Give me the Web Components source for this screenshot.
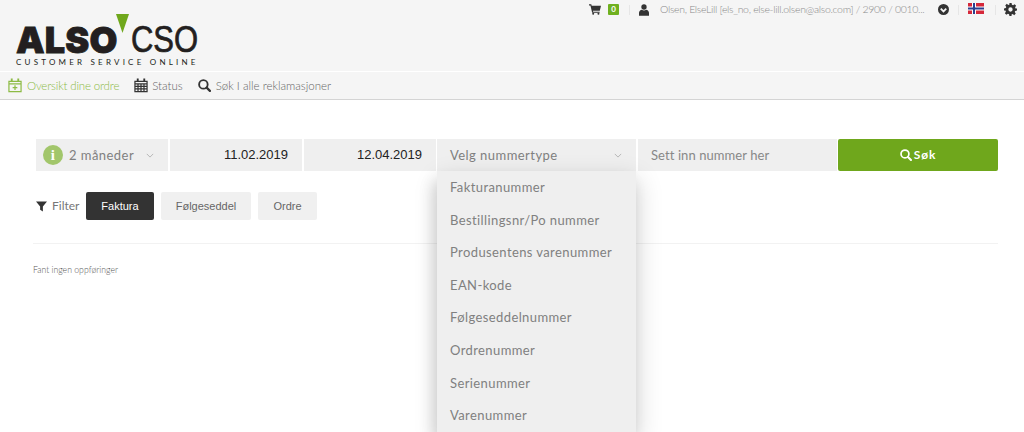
<!DOCTYPE html>
<html lang="no"><head><meta charset="utf-8"><title>ALSO CSO</title>
<style>html,body{margin:0;padding:0;background:#fff;overflow:hidden}body{width:1024px;height:432px;font-family:Lato,"Noto Sans",sans-serif}</style>
</head><body>
<cso-app></cso-app>
<script>
const I={
cart:'<svg viewBox="0 0 16 14" width="12" height="11"><path fill="currentColor" d="M0 0h3l.6 2H16l-1.6 6.5H5.2l.4 1.5h8.6v1.4H4.2L1.9 1.5H0z"/><circle fill="currentColor" cx="5.6" cy="12.7" r="1.3"/><circle fill="currentColor" cx="12.6" cy="12.7" r="1.3"/></svg>',
user:'<svg viewBox="0 0 12 14" width="10" height="12"><circle fill="currentColor" cx="6" cy="3.4" r="3.2"/><path fill="currentColor" d="M0 14v-3.6C0 8 1.8 7 3.4 6.6 4.2 7.2 5 7.5 6 7.5s1.8-.3 2.6-.9C10.200 7 12 8 12 10.400V14z"/></svg>',
chev:'<svg viewBox="0 0 12 12" width="11" height="11"><circle fill="currentColor" cx="6" cy="6" r="6"/><path fill="none" stroke="#f5f5f5" stroke-width="2" d="M3 5l3 3 3-3"/></svg>',
gear:'<svg viewBox="0 0 24 24" width="13" height="13"><path fill="currentColor" fill-rule="evenodd" d="M10 0h4l.6 3.300 2.200.9 2.800-1.900 2.800 2.800-1.900 2.800.9 2.200L24 10v4l-3.300.6-.9 2.200 1.900 2.800-2.800 2.800-2.800-1.900-2.200.9L14 24h-4l-.6-3.300-2.200-.9-2.800 1.900-2.800-2.800 1.900-2.800-.9-2.200L0 14v-4l3.300-.6.9-2.200-1.900-2.800 2.800-2.800 2.800 1.900 2.200-.9zM12 8a4 4 0 1 0 0 8 4 4 0 0 0 0-8z"/></svg>',
flag:'<svg viewBox="0 0 16 11" width="16" height="11"><rect width="16" height="11" fill="#d5283a"/><rect x="4" width="4" height="11" fill="#fff"/><rect y="3.500" width="16" height="4" fill="#fff"/><rect x="5" width="2" height="11" fill="#2c3f8f"/><rect y="4.500" width="16" height="2" fill="#2c3f8f"/></svg>',
calPlus:'<svg viewBox="0 0 15 15" width="14" height="15"><path fill="none" stroke="currentColor" stroke-width="1.300" d="M1 3h13v11H1zM1 5.800h13"/><path stroke="currentColor" stroke-width="2" d="M4 0v3.500M11 0v3.500"/><path stroke="currentColor" stroke-width="1.300" d="M7.500 7.300v5M5 9.800h5"/></svg>',
cal:'<svg viewBox="0 0 15 15" width="14" height="15"><path fill="none" stroke="currentColor" stroke-width="1.300" d="M1 3h13v11H1zM1 5.800h13M1 8.500h13M1 11.200h13M4.300 5.800V14M7.500 5.800V14M10.700 5.800V14"/><path stroke="currentColor" stroke-width="2" d="M4 0v3.500M11 0v3.500"/></svg>',
search:'<svg viewBox="0 0 14 14" width="13" height="13"><circle fill="none" stroke="currentColor" stroke-width="2" cx="5.800" cy="5.800" r="4.600"/><path stroke="currentColor" stroke-width="2.400" stroke-linecap="round" d="M9.300 9.300l3.500 3.500"/></svg>',
filter:'<svg viewBox="0 0 12 12" width="11" height="11"><path fill="currentColor" d="M0 .5h12L7.500 6v5.500l-3-2V6z"/></svg>',
down:'<svg viewBox="0 0 10 6" width="8" height="5"><path fill="none" stroke="currentColor" stroke-width="1" d="M1 1l4 4 4-4"/></svg>'
};
function el(name,css,html){customElements.define(name,class extends HTMLElement{constructor(){super();this.attachShadow({mode:'open'}).innerHTML='<style>'+css+'</style>'+html}})}

el('cso-logo',`:host{display:block;position:relative;width:220px;height:64px;color:#231f20}
.row{display:flex;align-items:flex-end;height:49px;padding-left:16px;line-height:32px}
.a{flex:none;font:900 36px/32px Inter,Roboto,sans-serif;letter-spacing:.2px;-webkit-text-stroke:.8px #231f20;width:115px}
.c{flex:none;font:400 36px/32px "Liberation Sans",sans-serif;-webkit-text-stroke:.7px #231f20;transform:scaleX(.86);transform-origin:left}
.s{font:400 8px/10px Lato,sans-serif;letter-spacing:3.220px;padding-left:16px;white-space:nowrap;margin-top:1px}
svg{position:absolute;left:116px;top:7px}`,
`<svg width="13" height="19" viewBox="0 0 13 19"><path fill="#6fa71c" d="M0 0h13L6.500 19z"/></svg><div class="row"><span class="a">ALSO</span><span class="c">CSO</span></div><div class="s">CUSTOMER SERVICE ONLINE</div>`);

el('cso-top',`:host{display:flex;align-items:center;height:19px;color:#8a8a8a;font:300 10.500px/19px Lato,sans-serif;white-space:nowrap}
.i{display:flex;color:#333}.b{background:#6fb01f;color:#fff;font:700 8px/11px Lato,sans-serif;width:11px;height:11px;text-align:center;margin-left:7px;border-radius:1px}
.d{width:1px;height:10px;background:#e6e6e6}`,
`<span class="i">${I.cart}</span><span class="b">0</span><span class="d" style="margin-left:10px"></span><span class="i" style="margin-left:9px">${I.user}</span><span style="width:263px;margin-left:11px;letter-spacing:-.32px">Olsen, ElseLill [els_no, else-lill.olsen@also.com] / 2900 / 0010...</span><span class="i" style="margin-left:15px">${I.chev}</span><span class="d" style="margin-left:9px"></span><span class="i" style="margin-left:9px;margin-top:-3px">${I.flag}</span><span class="d" style="margin-left:11px"></span><span class="i" style="margin-left:8px">${I.gear}</span>`);

el('cso-header',`:host{display:block;background:#f5f5f5;height:71px;position:relative}
.t{display:flex;justify-content:flex-end;padding-right:7px}
cso-logo{margin-top:-12px}`,`<div class="t"><cso-top></cso-top></div><cso-logo></cso-logo>`);

el('cso-nav',`:host{display:flex;align-items:center;background:#f5f5f5;height:27px;border-top:1px solid #fff;border-bottom:1px solid #d4d4d4;padding-left:8px;font:300 11.500px/27px Lato,sans-serif;color:#666;white-space:nowrap}
span{display:flex;align-items:center;gap:5px}.on{color:#8dbb45;letter-spacing:-.16px}svg{display:block}.g{color:#333}`,
`<span class="on">${I.calPlus}Oversikt dine ordre</span><span class="g" style="margin-left:15px;gap:4px">${I.cal}<b style="font-weight:300;color:#666">Status</b></span><span class="g" style="margin-left:15px">${I.search}<b style="font-weight:300;color:#666">Søk I alle reklamasjoner</b></span>`);

el('cso-select',`:host{display:flex;align-items:center;background:#efefef;height:32px;box-sizing:border-box;color:#808080;font:400 13px/32px Lato,sans-serif;letter-spacing:.45px;white-space:nowrap;padding:0 14px 0 13px}
.t{flex:1}.c{color:#aaa;display:flex;align-items:center}`,`<slot name="icon"></slot><span class="t"><slot></slot></span><span class="c">${I.down}</span>`);

el('cso-date',`:host{display:block;background:#efefef;height:32px;color:#222;font:400 13px/32px "Liberation Sans",sans-serif;letter-spacing:0;text-align:right;padding-right:14px;box-sizing:border-box}`,`<slot></slot>`);

el('cso-menu',`:host{display:block;position:absolute;left:437px;top:171px;width:199px;height:262px;background:#efefef;box-shadow:-4px 10px 14px rgba(0,0,0,.12),2px 8px 24px rgba(0,0,0,.16);color:#808080;font:400 13px/32.600px Lato,sans-serif;letter-spacing:.4px;padding:0 0 0 13px;box-sizing:border-box;white-space:nowrap;overflow:hidden}
div{height:32.600px}`,['Fakturanummer','Bestillingsnr/Po nummer','Produsentens varenummer','EAN-kode','Følgeseddelnummer','Ordrenummer','Serienummer','Varenummer'].map(x=>`<div>${x}</div>`).join(''));

el('cso-search',`:host{display:grid;grid-template-columns:132px 132px 132px 199px 199px 158px;column-gap:2px;height:32px;margin:39px 26px 0 36px}
.sel2{margin-left:-1px;margin-right:1px}
.n{background:#efefef;color:#888;font:400 13px/32px Lato,sans-serif;letter-spacing:.08px;padding-left:13px;margin-left:-1px;margin-right:1px}
.b{background:#6fa71c;color:#fff;font:700 12px/32px Lato,sans-serif;letter-spacing:.8px;display:flex;align-items:center;justify-content:center;gap:2px;border-radius:2px;margin-left:-2px}
.b svg{width:12px;height:12px}
.i{width:20px;height:20px;border-radius:50%;background:#a2c66b;color:#fff;font:900 15px/20px "Liberation Serif",serif;text-align:center;display:block;margin-right:6px;margin-left:-6px}`,
`<cso-select><span slot="icon" class="i">i</span>2 måneder</cso-select><cso-date>11.02.2019</cso-date><cso-date>12.04.2019</cso-date><cso-select class="sel2">Velg nummertype</cso-select><div class="n">Sett inn nummer her</div><div class="b">${I.search}Søk</div>`);

el('cso-filter',`:host{display:flex;align-items:center;height:28px;margin:21px 0 0 36px;color:#555}
.l{display:flex;align-items:center;gap:5px;font:400 12px/28px Lato,sans-serif;color:#777;width:50px}.l svg{color:#333}
button{all:unset;height:28px;box-sizing:border-box;text-align:center;background:#f0f0f0;color:#666;border-radius:2px;font:400 11px/27px "Liberation Sans",sans-serif}
.on{background:#333;color:#fff}`,
`<span class="l">${I.filter}Filter</span><button class="on" style="width:68px">Faktura</button><button style="width:90px;margin-left:7px">Følgeseddel</button><button style="width:59px;margin-left:7px">Ordre</button>`);

el('cso-app',`:host{display:block;position:relative;width:1024px;height:432px;overflow:hidden;color:#333}
hr{border:0;border-top:1px solid #f2f2f2;margin:23px 26px 0 33px}
p{margin:20px 0 0 33px;font:300 8.700px/12px Lato,sans-serif;color:#555}`,
`<cso-header></cso-header><cso-nav></cso-nav><cso-search></cso-search><cso-filter></cso-filter><hr><p>Fant ingen oppføringer</p><cso-menu></cso-menu>`);
</script>
</body></html>
